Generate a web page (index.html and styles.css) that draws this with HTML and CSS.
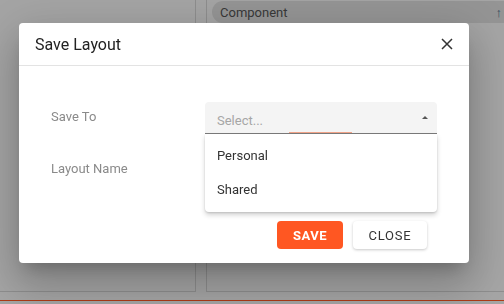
FILE: index.html
```html
<!DOCTYPE html>
<html lang="en">
<head>
    <meta charset="UTF-8">
    <meta name="viewport" content="width=device-width, initial-scale=1.0">
    <title>Save Layout</title>
    <link rel="stylesheet" href="styles.css">
</head>
<body>

<div class="page">
    <div class="panels">
        <div class="panel panel-left"></div>
        <div class="panel panel-right">
            <div class="column-head">
                <span>Component</span>
                <span class="sort">&#8593;</span>
            </div>
        </div>
    </div>
    <div class="status-line"></div>
</div>

<div class="backdrop"></div>

<div class="dialog">
    <div class="dialog-header">
        <h2>Save Layout</h2>
        <svg class="close-icon" width="12" height="12" viewBox="0 0 12 12">
            <path d="M1 1 L11 11 M11 1 L1 11" stroke="#333" stroke-width="1.5" fill="none"/>
        </svg>
    </div>
    <div class="dialog-body">
        <div class="form">
            <label class="field-label">Save To</label>
            <div class="select">
                <span class="placeholder">Select...</span>
                <span class="caret"></span>
                <span class="focus-bar"></span>
                <ul class="menu">
                    <li>Personal</li>
                    <li>Shared</li>
                </ul>
            </div>
            <label class="field-label">Layout Name</label>
            <div class="input"></div>
        </div>
        <div class="actions">
            <button class="btn btn-save">SAVE</button>
            <button class="btn btn-close">CLOSE</button>
        </div>
    </div>
</div>

</body>
</html>
```

FILE: styles.css
```css
html, body {
    margin: 0;
    padding: 0;
}

body {
    font-family: Roboto, "Liberation Sans", Arial, sans-serif;
    background-color: #f3f3f3;
    width: 504px;
    height: 304px;
    overflow: hidden;
}

/* Page behind the dialog */
.page {
    height: 304px;
}

.panels {
    display: flex;
    gap: 10px;
    height: 292px;
}

.panel {
    box-sizing: border-box;
    height: 292px;
    border-bottom: 1px solid #d2d2d2;
}

.panel-left {
    width: 196px;
    border-right: 1px solid #d2d2d2;
}

.panel-right {
    flex: 1;
    border-left: 1px solid #d2d2d2;
    padding: 1px 0 0 5px;
}

.column-head {
    display: flex;
    justify-content: space-between;
    align-items: center;
    height: 22px;
    padding: 0 2px 0 8px;
    border-radius: 11px 0 0 11px;
    background-color: #dcdcdc;
    color: #555;
    font-size: 13px;
    font-weight: 400;
}

.sort {
    font-size: 13px;
    color: #4a6c8a;
}

.status-line {
    margin-top: 8px;
    height: 1px;
    background-color: #ff5722;
}

.backdrop {
    position: fixed;
    inset: 0;
    background-color: rgba(0, 0, 0, 0.32);
}

/* Dialog */
.dialog {
    position: absolute;
    left: 19px;
    top: 23px;
    width: 450px;
    height: 240px;
    background-color: #fff;
    border-radius: 4px;
    box-shadow: 0 11px 15px -7px rgba(0, 0, 0, 0.2),
                0 24px 38px 3px rgba(0, 0, 0, 0.14),
                0 9px 46px 8px rgba(0, 0, 0, 0.12);
}

.dialog-header {
    display: flex;
    justify-content: space-between;
    align-items: center;
    height: 42px;
    padding: 0 16px;
    border-bottom: 1px solid #e3e3e3;
}

.dialog-header h2 {
    margin: 0;
    font-size: 16px;
    font-weight: 400;
    color: #222;
}

.dialog-body {
    padding: 36px 32px 0;
}

.form {
    display: grid;
    grid-template-columns: 154px 232px;
    grid-template-rows: 32px 32px;
    row-gap: 20px;
}

.field-label {
    padding-top: 7px;
    line-height: 16px;
    font-size: 13px;
    color: #8a8a8a;
}

.select {
    position: relative;
    box-sizing: border-box;
    height: 32px;
    padding: 11px 12px 0;
    background-color: #f4f4f4;
    border-radius: 4px 4px 0 0;
    border-bottom: 1px solid #7a7a7a;
}

.placeholder {
    display: block;
    line-height: 16px;
    font-size: 13px;
    color: #a6a6a6;
}

.caret {
    position: absolute;
    right: 9px;
    top: 14px;
    width: 0;
    height: 0;
    border-left: 3px solid transparent;
    border-right: 3px solid transparent;
    border-bottom: 3px solid #555;
}

.focus-bar {
    position: absolute;
    left: 84px;
    bottom: 0;
    width: 63px;
    height: 1px;
    background-color: #f2a489;
}

.menu {
    position: absolute;
    left: 0;
    right: 0;
    top: 32px;
    margin: 0;
    padding: 5px 0;
    list-style: none;
    background-color: #fff;
    border-radius: 0 0 4px 4px;
    box-shadow: 0 3px 5px rgba(0, 0, 0, 0.18), 0 1px 2px rgba(0, 0, 0, 0.12);
    z-index: 2;
}

.menu li {
    height: 34px;
    line-height: 34px;
    padding-left: 12px;
    font-size: 13px;
    color: #333;
}

.input {
    border-bottom: 1px solid #ccc;
}

.actions {
    display: flex;
    justify-content: flex-end;
    gap: 10px;
    margin-top: 35px;
    padding-right: 10px;
}

.btn {
    height: 28px;
    border: none;
    border-radius: 4px;
    font-family: Roboto, "Liberation Sans", Arial, sans-serif;
    font-size: 13px;
    cursor: pointer;
    padding: 0;
}

.btn-save {
    width: 66px;
    background-color: #ff5722;
    color: #fff;
    font-weight: 700;
    letter-spacing: 0.5px;
}

.btn-close {
    width: 74px;
    background-color: #fff;
    color: #333;
    font-weight: 400;
    letter-spacing: 0.8px;
    box-shadow: 0 1px 3px rgba(0, 0, 0, 0.22);
}
```
